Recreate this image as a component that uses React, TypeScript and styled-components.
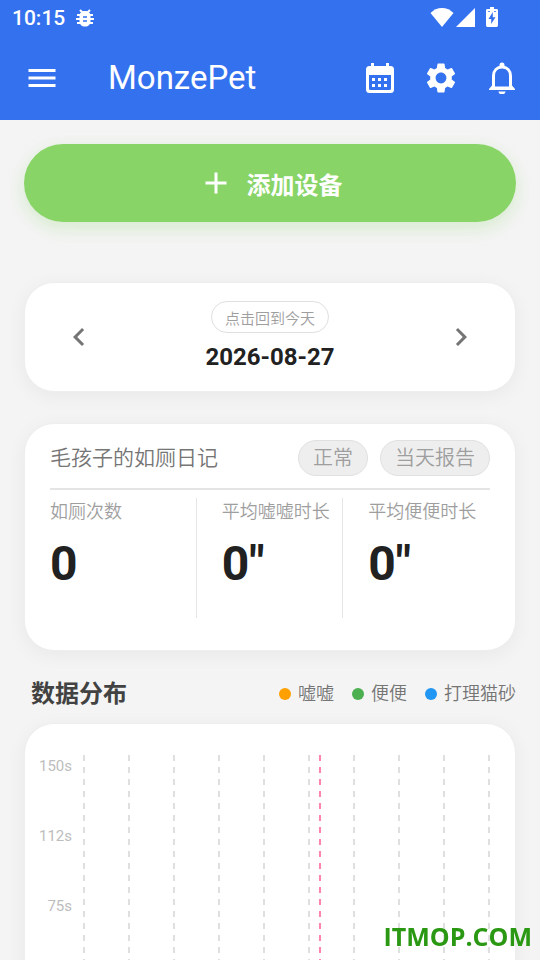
import React from "react";
import styled, { createGlobalStyle } from "styled-components";
import { MdMenu, MdSettings, MdChevronLeft, MdChevronRight, MdAdd } from "react-icons/md";

const GlobalStyle = createGlobalStyle`
  *, *::before, *::after { box-sizing: border-box; }
  body {
    margin: 0;
    background: #f4f4f4;
    color: #212121;
    font-family: Roboto, "Noto Sans CJK SC", sans-serif;
  }
  button { font: inherit; color: inherit; border: 0; background: none; padding: 0; cursor: pointer; }
  h1, h2, dl, dt, dd, ul { margin: 0; padding: 0; }
  ul { list-style: none; }
  svg { display: block; }
`;

const Screen = styled.div`
  height: 100vh;
  display: flex;
  flex-direction: column;
  overflow: hidden;
`;

const TopArea = styled.header`
  flex: none;
  background: #3471ee;
  color: #fff;
`;

const StatusBar = styled.div`
  height: 36px;
  padding: 0 42px 0 12px;
  display: flex;
  align-items: center;
  font-size: 21px;
  font-weight: 500;
`;

const StatusIcons = styled.div`
  margin-left: auto;
  display: flex;
  align-items: center;
  gap: 2px;
`;

const BugSlot = styled.span`
  margin-left: 11px;
`;

const BatterySlot = styled.span`
  margin-left: 9px;
`;

const AppBar = styled.div`
  height: 84px;
  padding: 0 20px 0 24px;
  display: flex;
  align-items: center;
`;

const AppTitle = styled.h1`
  margin-left: 48px;
  font-size: 33px;
  line-height: 40px;
  font-weight: 400;
`;

const Actions = styled.div`
  margin-left: auto;
  display: flex;
  align-items: center;
  gap: 25px;
`;

const IconButton = styled.button`
  width: 36px;
  height: 36px;
  display: grid;
  place-items: center;
`;

const Content = styled.main`
  flex: 1;
  min-height: 0;
  overflow-y: auto;
  scrollbar-width: none;
  padding: 24px;
`;

const AddButton = styled.button`
  width: 100%;
  height: 78px;
  border-radius: 39px;
  background: #88d467;
  color: #fff;
  display: flex;
  align-items: center;
  justify-content: center;
  gap: 13px;
  font-size: 24px;
  font-weight: 700;
  box-shadow: 0 6px 18px rgba(136, 212, 103, 0.28);
`;

const Card = styled.section`
  background: #fff;
  border: 1px solid #eeeeee;
  border-radius: 30px;
  box-shadow: 0 4px 20px rgba(0, 0, 0, 0.05);
`;

const DateCard = styled(Card)`
  margin-top: 60px;
  height: 110px;
  padding: 0 36px;
  display: flex;
  align-items: center;
  justify-content: space-between;
  color: #757575;
`;

const DateCenter = styled.div`
  display: flex;
  flex-direction: column;
  align-items: center;
  gap: 8px;
`;

const TodayButton = styled.button`
  height: 32px;
  padding: 0 13px;
  border: 1px solid #e0e0e0;
  border-radius: 16px;
  color: #9e9e9e;
  font-size: 15px;
  font-weight: 350;
`;

const DateText = styled.time`
  color: #212121;
  font-size: 24px;
  line-height: 32px;
  font-weight: 700;
`;

const DiaryCard = styled(Card)`
  margin-top: 31px;
  min-height: 228px;
  padding: 16px 25px 0;
`;

const DiaryHead = styled.div`
  display: flex;
  align-items: center;
  gap: 12px;
  padding-bottom: 12px;
  border-bottom: 2px solid #e4e4e4;
`;

const DiaryTitle = styled.h2`
  flex: 1;
  color: #757575;
  font-size: 21px;
  line-height: 32px;
  font-weight: 350;
`;

const Pill = styled.button`
  height: 36px;
  padding: 0 14px;
  border: 1px solid #e0e0e0;
  border-radius: 18px;
  background: #eeeeee;
  color: #9e9e9e;
  font-size: 20px;
  line-height: 32px;
  font-weight: 350;
`;

const Stats = styled.dl`
  margin-top: 8px;
  display: grid;
  grid-template-columns: repeat(3, 1fr);
`;

const Stat = styled.div`
  height: 120px;
  white-space: nowrap;
  & + & {
    padding-left: 25px;
  }
  &:not(:last-child) {
    border-right: 1px solid #e6e6e6;
  }
`;

const StatLabel = styled.dt`
  color: #9e9e9e;
  font-size: 18px;
  line-height: 28px;
  font-weight: 350;
`;

const StatValue = styled.dd`
  margin-top: 10px;
  font-size: 48px;
  line-height: 56px;
  font-weight: 700;
`;

const SectionHead = styled.div`
  margin-top: 25px;
  padding-left: 7px;
  display: flex;
  align-items: center;
  justify-content: space-between;
`;

const SectionTitle = styled.h2`
  color: #424242;
  font-size: 24px;
  line-height: 36px;
  font-weight: 700;
`;

const Legend = styled.ul`
  display: flex;
  gap: 18px;
`;

const LegendItem = styled.li<{ $color: string }>`
  display: flex;
  align-items: center;
  gap: 7px;
  color: #757575;
  font-size: 18px;
  line-height: 28px;
  font-weight: 350;
  &::before {
    content: "";
    width: 12px;
    height: 12px;
    border-radius: 50%;
    background: ${(p) => p.$color};
  }
`;

const ChartCard = styled(Card)`
  margin-top: 11px;
  padding: 31px 23px 31px 7px;
  display: flex;
  gap: 10px;
`;

const AxisLabels = styled.div`
  width: 40px;
  display: grid;
  grid-auto-rows: 70px;
  justify-items: end;
  color: #bdbdbd;
  font-size: 15px;
  line-height: 22px;
`;

const Plot = styled.svg`
  flex: 1;
  min-width: 0;
  height: 350px;
`;

const Watermark = styled.div`
  position: fixed;
  right: 8px;
  bottom: 6px;
  color: #2a9812;
  font-family: "Open Sans", sans-serif;
  font-size: 25px;
  line-height: 36px;
  font-weight: 700;
`;

const BugIcon = () => (
  <svg width="18" height="18" viewBox="0 0 18 18" fill="none" stroke="#fff" strokeWidth="2">
    <path d="M4 1l3 3M14 1l-3 3M1 6h16M0 10h18M1 14h16" />
    <path d="M9 2c3.500 0 5.500 2 5.500 5v5c0 3.500-2 5.500-5.500 5.500S3.500 15.500 3.500 12V7C3.500 4 5.500 2 9 2z" fill="#fff" stroke="none" />
    <path d="M7 8h4M7 12h4" stroke="#3471ee" strokeWidth="1.500" />
  </svg>
);

const WifiIcon = () => (
  <svg width="24" height="20" viewBox="0 0 24 20" fill="#fff">
    <path d="M12 19L0.500 5C3.500 1.900 7.500 0 12 0S20.500 1.900 23.500 5z" />
  </svg>
);

const SignalIcon = () => (
  <svg width="19" height="20" viewBox="0 0 19 20" fill="#fff">
    <path d="M19 0v19H0z" />
  </svg>
);

const BatteryIcon = () => (
  <svg width="12" height="22" viewBox="0 0 12 22">
    <path
      fill="#fff"
      d="M4 0h4v2h2.600Q12 2 12 3.400v15.200Q12 20 10.600 20H1.400Q0 20 0 18.600V3.400Q0 2 1.400 2H4z"
    />
    <path fill="#3471ee" d="M6.800 5v5.200h2.700L5.200 17v-5H2.500zM2 4.200h2v0.800H2zM8 4.200h2v0.800H8z" />
  </svg>
);

const CalendarIcon = () => (
  <svg width="28" height="30" viewBox="0 0 28 30">
    <path
      fill="#fff"
      fillRule="evenodd"
      d="M5 0h3v3h12V0h3v3h1.500Q28 3 28 6.500V26.500Q28 30 24.500 30h-21Q0 30 0 26.500V6.500Q0 3 3.500 3H5zM3 12v13.500Q3 27 4.500 27h19Q25 27 25 25.500V12z"
    />
    <path fill="#fff" d="M6 15h3v3H6zM12 15h3v3h-3zM18 15h3v3h-3zM6 21h3v3H6zM12 21h3v3h-3zM18 21h3v3h-3z" />
  </svg>
);

const BellIcon = () => (
  <svg width="28" height="32" viewBox="0 0 28 32">
    <path
      fill="none"
      stroke="#fff"
      strokeWidth="3"
      d="M5.500 26V14C5.500 8.500 9 5 14 5s8.500 3.500 8.500 9V26"
    />
    <path
      fill="#fff"
      d="M11.500 5.500V3a2.500 2.500 0 0 1 5 0v2.500zM4 23.500l3 1h14l3-1L27 27v1H1v-1zM10.500 29.500h7a3.500 2.800 0 0 1-7 0z"
    />
  </svg>
);

const axis = ["150s", "112s", "75s"];
const gridLines = Array.from({ length: 10 }, (_, i) => 2 + i * 45);

export default function App() {
  return (
    <>
      <GlobalStyle />
      <Screen>
        <TopArea>
          <StatusBar>
            <span>10:15</span>
            <BugSlot><BugIcon /></BugSlot>
            <StatusIcons>
              <WifiIcon />
              <SignalIcon />
              <BatterySlot><BatteryIcon /></BatterySlot>
            </StatusIcons>
          </StatusBar>
          <AppBar>
            <IconButton aria-label="菜单"><MdMenu size={36} /></IconButton>
            <AppTitle>MonzePet</AppTitle>
            <Actions>
              <IconButton aria-label="日历"><CalendarIcon /></IconButton>
              <IconButton aria-label="设置"><MdSettings size={36} /></IconButton>
              <IconButton aria-label="通知"><BellIcon /></IconButton>
            </Actions>
          </AppBar>
        </TopArea>
        <Content>
          <AddButton><MdAdd size={36} />添加设备</AddButton>
          <DateCard>
            <IconButton aria-label="前一天"><MdChevronLeft size={36} /></IconButton>
            <DateCenter>
              <TodayButton>点击回到今天</TodayButton>
              <DateText>2026-08-27</DateText>
            </DateCenter>
            <IconButton aria-label="后一天"><MdChevronRight size={36} /></IconButton>
          </DateCard>
          <DiaryCard>
            <DiaryHead>
              <DiaryTitle>毛孩子的如厕日记</DiaryTitle>
              <Pill>正常</Pill>
              <Pill>当天报告</Pill>
            </DiaryHead>
            <Stats>
              <Stat><StatLabel>如厕次数</StatLabel><StatValue>0</StatValue></Stat>
              <Stat><StatLabel>平均嘘嘘时长</StatLabel><StatValue>0"</StatValue></Stat>
              <Stat><StatLabel>平均便便时长</StatLabel><StatValue>0"</StatValue></Stat>
            </Stats>
          </DiaryCard>
          <SectionHead>
            <SectionTitle>数据分布</SectionTitle>
            <Legend>
              <LegendItem $color="#ffa000">嘘嘘</LegendItem>
              <LegendItem $color="#4caf50">便便</LegendItem>
              <LegendItem $color="#2196f3">打理猫砂</LegendItem>
            </Legend>
          </SectionHead>
          <ChartCard>
            <AxisLabels>
              {axis.map((label) => <span key={label}>{label}</span>)}
            </AxisLabels>
            <Plot aria-hidden="true">
              {gridLines.map((x) => (
                <line key={x} x1={x} x2={x} y1="0" y2="350" stroke="#dfdfdf" strokeWidth="2" strokeDasharray="6 6" />
              ))}
              <line x1="238" x2="238" y1="0" y2="350" stroke="#ff85ad" strokeWidth="2" strokeDasharray="6 6" />
            </Plot>
          </ChartCard>
        </Content>
      </Screen>
      <Watermark>ITMOP.COM</Watermark>
    </>
  );
}
